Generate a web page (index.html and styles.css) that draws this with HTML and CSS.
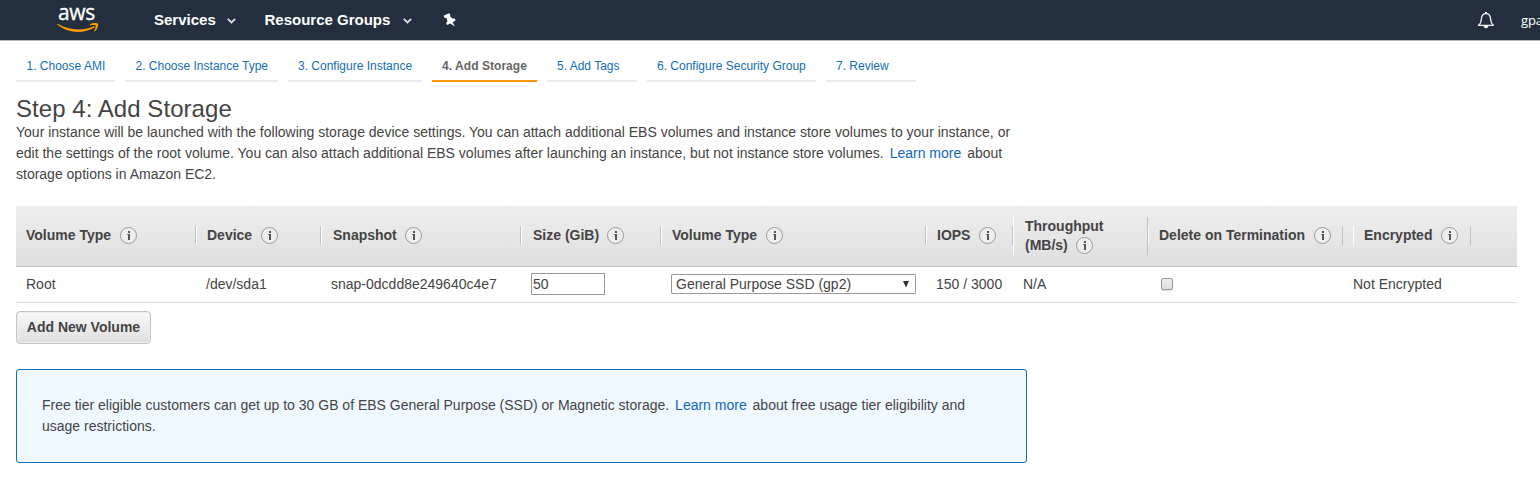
FILE: index.html
```html
<!DOCTYPE html>
<html lang="en">
<head>
<meta charset="utf-8">
<title>Step 4: Add Storage</title>
<link rel="stylesheet" href="styles.css">
</head>
<body>
<header class="topbar">
  <div class="logo">
    <span class="logo-text">aws</span>
    <svg class="logo-smile" width="42" height="10" viewBox="0 0 42 10"><path d="M.6 .8C12 7.600 26 8.200 36.500 3.200c1-.4 1.700.5.8 1.300C27 11 10.500 10.600 .3 1.600c-.6-.6-.2-1.100.3-.8z" fill="#f90"/><path d="M32.800 1.400C35 0 39.500-.3 41 .6c.7 1.600-.6 5.600-3 7.700-.5.4-.9.100-.7-.4.800-2 1.800-4.700 1.300-5.400-.6-.7-3.400-.5-5.400-.3-.6.100-.8-.5-.4-.8z" fill="#f90"/></svg>
  </div>
  <span class="menu services">Services</span>
  <svg class="chev" width="9" height="6" viewBox="0 0 9 6"><path d="M.8 .9 4.500 4.400 8.200 .9" fill="none" stroke="#ddd" stroke-width="1.900"/></svg>
  <span class="menu groups">Resource Groups</span>
  <svg class="chev" width="9" height="6" viewBox="0 0 9 6"><path d="M.8 .9 4.500 4.400 8.200 .9" fill="none" stroke="#ddd" stroke-width="1.900"/></svg>
  <svg class="pin" width="13" height="14" viewBox="0 0 13 14"><path d="M.6 2.800 5.800 .2 7.400 1.600 7 3 9.200 5.400 11.600 5.600 12.600 7.400 9.600 9.200 11.900 13.500 7.200 10.400 4.100 12 3.200 9.900 4.500 7.800 3.400 4.900 1.400 4.700z" fill="#fff"/></svg>
  <svg class="bell" width="18" height="18" viewBox="0 0 18 18"><path d="M1.500 14.300h15c-2.300-1.600-2.700-3.300-2.900-6.300C13.400 4.300 12 2.700 9 2.700S4.600 4.300 4.400 8c-.2 3-.6 4.700-2.900 6.300z" fill="none" stroke="#eee" stroke-width="1.300" stroke-linejoin="round"/><path d="M8 1.100h2v1.600H8zM6.600 15h4.800c-.3 1.500-1.100 2.200-2.400 2.200S6.900 16.500 6.600 15z" fill="#fff"/></svg>
  <span class="user">gpa</span>
</header>
<main class="page">
  <nav class="tabs">
    <a class="tab t1">1. Choose AMI</a>
    <a class="tab t2">2. Choose Instance Type</a>
    <a class="tab t3">3. Configure Instance</a>
    <a class="tab t4 active">4. Add Storage</a>
    <a class="tab t5">5. Add Tags</a>
    <a class="tab t6">6. Configure Security Group</a>
    <a class="tab t7">7. Review</a>
  </nav>
  <h1 class="title">Step 4: Add Storage</h1>
  <p class="intro"><span class="line">Your instance will be launched with the following storage device settings. You can attach additional EBS volumes and instance store volumes to your instance, or</span><br><span class="line">edit the settings of the root volume. You can also attach additional EBS volumes after launching an instance, but not instance store volumes. <a class="link">Learn more</a> about</span><br><span class="line">storage options in Amazon EC2.</span></p>
  <section class="table">
    <div class="row head">
      <div class="th first">Volume Type<i class="info"></i></div>
      <div class="th near">Device<i class="info"></i></div>
      <div class="th">Snapshot<i class="info snap"></i></div>
      <div class="th">Size (GiB)<i class="info snap"></i></div>
      <div class="th near">Volume Type<i class="info"></i></div>
      <div class="th near">IOPS<i class="info"></i></div>
      <div class="th tall">Throughput<br>(MB/s)<i class="info snap"></i></div>
      <div class="th near term">Delete on Termination<i class="info"></i></div>
      <div class="th near">Encrypted<i class="info"></i></div>
    </div>
    <div class="row data">
      <div class="td">Root</div>
      <div class="td">/dev/sda1</div>
      <div class="td">snap-0dcdd8e249640c4e7</div>
      <div class="td"><span class="size">50</span></div>
      <div class="td"><span class="select">General Purpose SSD (gp2)<svg width="8" height="7" viewBox="0 0 8 7"><path d="M1 0h6L4 6.500z" fill="#333"/></svg></span></div>
      <div class="td">150 / 3000</div>
      <div class="td">N/A</div>
      <div class="td"><span class="check"></span></div>
      <div class="td last">Not Encrypted</div>
    </div>
  </section>
  <button class="add">Add New Volume</button>
  <aside class="notice"><span class="line">Free tier eligible customers can get up to 30 GB of EBS General Purpose (SSD) or Magnetic storage. <a class="link">Learn more</a> about free usage tier eligibility and</span><br><span class="line">usage restrictions.</span></aside>
</main>
</body>
</html>
```
FILE: styles.css
```css
* { box-sizing: border-box; }
body { margin: 0; background: #fff; color: #444; font: 14px/21px "Liberation Sans", Arial, sans-serif; overflow: hidden; }
svg { display: block; flex: none; }
.topbar { display: flex; align-items: center; height: 41px; background: #232f3e; border-bottom: 1px solid #b5b8bb; padding-left: 57px; white-space: nowrap; overflow: hidden; }
.logo { width: 42px; height: 40px; padding-top: 3px; flex: none; }
.logo-text { display: block; height: 20px; padding-left: 1px; color: #fff; font: 500 21px/18px "Open Sans", "Noto Sans", sans-serif; letter-spacing: -.3px; -webkit-text-stroke: .3px #fff; }
.menu { flex: none; color: #fff; font-size: 15px; font-weight: bold; padding-bottom: 2px; }
.services { margin-left: 55px; width: 73px; }
.groups { margin-left: 28px; width: 139px; padding-left: .5px; }
.chev { margin-top: 2px; }
.pin { margin-left: 31px; }
.bell { margin-left: 1021px; }
.user { margin-left: 26px; flex: none; color: #fff; font: 13px/20px "Open Sans", sans-serif; padding-bottom: 1px; letter-spacing: -.1px; }
.page { padding: 9px 23px 0 16px; }
.tabs { display: flex; gap: 10px; }
.tab { height: 32px; border-bottom: 2px solid #eaeaea; padding-left: 10.500px; color: #146eb4; font-size: 12px; line-height: 33px; white-space: nowrap; }
.t1 { width: 99px; }
.t2 { width: 153px; }
.t3 { width: 134px; }
.t4 { width: 105px; }
.t5, .t7 { width: 90px; }
.t6 { width: 169px; padding-left: 10px; }
.t3, .t5, .t7 { padding-left: 10px; }
.tab.active { padding-left: 10px; color: #666; font-weight: bold; border-color: #f90; letter-spacing: .05px; }
.title { margin: 13px 0 0; font-size: 24px; line-height: 27px; font-weight: normal; letter-spacing: .05px; }
.intro { margin: 0; }
.line { white-space: nowrap; }
.link { color: #1166bb; margin: 0 2px; }
.table { margin-top: 21px; }
.row { display: grid; grid-template-columns: 180px 125px 200px 140px 265px 87px 135px 205px 118px; }
.head { height: 61px; align-items: center; background: linear-gradient(#eee, #dfdfdf); border-bottom: 1px solid #c4c4c4; }
.th { display: block; height: 19px; margin-top: -1px; padding-left: 11px; border-left: 1px solid #fff; border-right: 1px solid #c2c2c2; color: #444; font-weight: bold; line-height: 19px; white-space: nowrap; }
.near { padding-left: 10px; }
.first { border-left: 0; padding-left: 10px; }
.tall { height: 38px; }
.term { margin-right: 10px; }
.info { display: inline-flex; justify-content: center; align-items: center; width: 17px; height: 17px; margin: -4px 0 -2px 9px; border: 1px solid #999; border-radius: 50%; background: #eee; vertical-align: middle; }
.tall .info { margin: -3px 0 -3px 8px; }
.snap { margin-left: 8px; }
.info::before { content: ""; width: 3px; height: 9px; background: linear-gradient(#555, #555) 1px 0 / 2px 2px no-repeat, linear-gradient(#777, #777) 0 3px / 1px 1px no-repeat, linear-gradient(#555, #555) 1px 3px / 2px 6px no-repeat; }
.data { height: 36px; align-items: center; border-bottom: 1px solid #ddd; }
.td { padding-left: 10px; white-space: nowrap; }
.last { padding-left: 0; }
.size { display: block; width: 74px; height: 22px; margin-bottom: 1px; border: 1px solid #999; padding-left: 1px; line-height: 21px; }
.select { display: flex; justify-content: space-between; align-items: center; width: 245px; height: 20px; margin-bottom: 1px; border: 1px solid #999; border-radius: 1px; padding: 0 5px 0 4px; line-height: 19px; }
.check { display: block; width: 12px; height: 12px; margin: 0 0 1px 3px; border: 1px solid #999; border-radius: 2px; background: linear-gradient(#eee, #ddd); box-shadow: 0 1px 1px #ddd; }
.add { display: block; margin: 8px 0 0; width: 135px; height: 33px; padding: 0 0 1px; border: 1px solid #c4c4c4; border-radius: 4px; background: linear-gradient(#f8f8f8, #dfdfdf); color: #444; font: bold 14px/30px "Liberation Sans", Arial, sans-serif; box-shadow: inset 0 0 0 1px #eee; }
.notice { margin-top: 25px; width: 1011px; height: 94px; border: 1px solid #146eb4; border-radius: 3px; background: #f0f8ff; padding: 25px; }
```
